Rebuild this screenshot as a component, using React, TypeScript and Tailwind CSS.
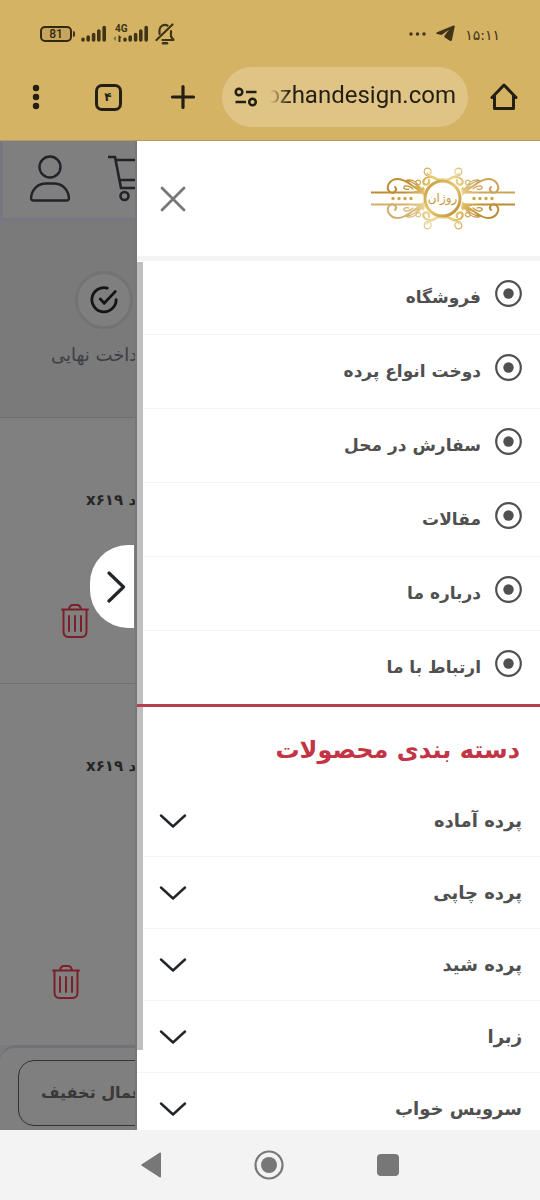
import React from 'react';

const menuItems = [
  'فروشگاه',
  'دوخت انواع پرده',
  'سفارش در محل',
  'مقالات',
  'درباره ما',
  'ارتباط با ما',
];

const categories = ['پرده آماده', 'پرده چاپی', 'پرده شید', 'زبرا', 'سرویس خواب'];

const SignalBars: React.FC = () => (
  <svg width="26" height="17" viewBox="0 0 26 17" fill="none" stroke="currentColor" strokeWidth="3.6" strokeLinecap="round">
    <path d="M2 15v-.6M7.2 15v-3M12.6 15V9.500M17.800 15V6M23.200 15V2.500" />
  </svg>
);

const StatusBar: React.FC = () => (
  <div className="flex h-[67px] items-center justify-between px-10 text-[#403416]">
    <div className="flex items-center">
      <div className="flex items-center">
        <div className="flex h-4 w-8 items-center justify-center rounded-[5px] border-2 border-current bg-[#c5a65c] font-['Roboto',sans-serif] text-xs font-medium text-[#33290f]">
          81
        </div>
        <div className="ml-px h-1.5 w-0.5 rounded-r bg-current" />
      </div>
      <div className="ml-1.5">
        <SignalBars />
      </div>
      <div className="relative ml-4">
        <SignalBars />
        <span className="absolute -top-0.5 -left-2 font-['Roboto',sans-serif] text-[10px] leading-3 font-bold">4G</span>
        <svg className="absolute bottom-0 -left-2.5" width="12" height="7" viewBox="0 0 12 7" fill="currentColor">
          <path d="M3 1v5L0 3.500z" opacity=".5" />
          <path d="M5.500 0 9 2.500H7.500V7h-2z" />
        </svg>
      </div>
      <svg className="ml-1.5" width="20" height="22" viewBox="0 0 20 22" fill="none" stroke="currentColor" strokeWidth="2.200" strokeLinecap="round" strokeLinejoin="round">
        <path d="M4.500 11V8a5.500 5.500 0 0 1 8-5.500M1.500 17 17.500 1.500M7.500 17h11L16 13.500V8" />
        <path d="M8 20.200h4" strokeWidth="2.500" />
      </svg>
    </div>
    <div className="flex items-center gap-2.5">
      <svg width="17" height="4" viewBox="0 0 17 4" fill="currentColor">
        <circle cx="2" cy="2" r="1.700" />
        <circle cx="8.500" cy="2" r="1.700" />
        <circle cx="15" cy="2" r="1.700" />
      </svg>
      <svg width="19" height="17" viewBox="0 0 19 17" fill="currentColor">
        <path d="M17.500.6 1 7.200c-.9.400-.9 1.500 0 1.800l4.600.9L13 4.800 9 10c-1 1.200-.8 2 .3 2.800l4.500 3c1 .6 1.900.3 2.100-.8L18.700 1.800c.2-1-.4-1.500-1.200-1.200z" />
      </svg>
      <span className="pt-0.5 font-['DejaVu_Sans',sans-serif] text-sm">۱۵:۱۱</span>
    </div>
  </div>
);

const Toolbar: React.FC = () => (
  <div className="flex h-[60px] items-center text-[#231f14]">
    <button aria-label="منو" className="flex w-[72px] justify-center">
      <svg width="8" height="26" viewBox="0 0 8 26" fill="currentColor">
        <circle cx="4" cy="4" r="3.200" />
        <circle cx="4" cy="13" r="3.200" />
        <circle cx="4" cy="22" r="3.200" />
      </svg>
    </button>
    <button className="flex w-[72px] justify-center">
      <span className="flex h-[27px] w-[27px] items-center justify-center rounded-[7px] border-3 border-current font-['DejaVu_Sans',sans-serif] text-xs leading-3 font-bold">
        ۴
      </span>
    </button>
    <button aria-label="برگه جدید" className="flex w-[78px] justify-center">
      <svg width="26" height="26" viewBox="0 0 26 26" stroke="currentColor" strokeWidth="3.200" strokeLinecap="round">
        <path d="M13 2.500v21M2.500 13h21" />
      </svg>
    </button>
    <div className="flex h-[60px] min-w-0 flex-1 items-center gap-3 rounded-full bg-[#dfc485] px-3">
      <svg className="shrink-0" width="24" height="20" viewBox="0 0 24 20" fill="none" stroke="currentColor" strokeWidth="2.500">
        <circle cx="5" cy="5" r="3.300" />
        <circle cx="18.500" cy="15" r="3.300" />
        <path d="M12 5h10.500M1.500 15H12" />
      </svg>
      <div className="flex min-w-0 flex-1 justify-end overflow-hidden pb-1 [mask-image:linear-gradient(to_right,transparent,black_20px)]">
        <span dir="ltr" className="font-['Roboto',sans-serif] text-2xl whitespace-nowrap">ozhandesign.com</span>
      </div>
    </div>
    <button aria-label="خانه" className="flex w-[72px] justify-center">
      <svg width="28" height="28" viewBox="0 0 28 28" fill="none" stroke="currentColor" strokeWidth="3" strokeLinejoin="round" strokeLinecap="round">
        <path d="M2 14.500 14 2l12 12.500M4.500 13v12.500h19V13" />
      </svg>
    </button>
  </div>
);

const TrashIcon: React.FC = () => (
  <svg width="28" height="34" viewBox="0 0 28 34" fill="none" stroke="#7c1f29" strokeWidth="2" strokeLinecap="round">
    <path d="M1 5.500h26M8 5.500C8.500 2 10 1 12 1h4c2 0 3.500 1 4 4.500M2.500 5.500v22c0 3.500 1.500 5.500 5 5.500h13c3.500 0 5-2 5-5.500v-22" />
    <path d="M8 12v15M14 12v15M20 12v15" />
  </svg>
);

const ShopPage: React.FC = () => (
  <div className="flex w-1/4 flex-col overflow-hidden bg-[#808080] font-['DejaVu_Sans',sans-serif] whitespace-nowrap">
    <div className="flex h-20 shrink-0 gap-[38px] border-b-3 border-l-3 border-[#777783] bg-[#7f7f7f] pt-3.5 pl-[27px] text-[#222329]">
      <svg className="shrink-0" width="40" height="47" viewBox="0 0 40 47" fill="none" stroke="currentColor" strokeWidth="2.400">
        <circle cx="20" cy="12" r="10.500" />
        <path d="M3 45.500h34c1.500 0 2-1 2-2.500C38 34 32 28.500 24 28.500h-8C8 28.500 2 34 1 43c0 1.500.500 2.500 2 2.500z" />
      </svg>
      <svg className="shrink-0" width="46" height="47" viewBox="0 0 46 47" fill="none" stroke="currentColor" strokeWidth="2.600">
        <path d="M0 2h7l6 31h27M8 5h36l-4 20H12" />
        <circle cx="16.500" cy="41" r="4" />
        <circle cx="36" cy="41" r="4" />
      </svg>
    </div>
    <div className="flex flex-col items-start border-b border-[#6f6f6f] bg-[#7a7a7a] pt-[50px] pb-12">
      <div className="ml-[75px] flex h-[58px] w-[58px] items-center justify-center rounded-full border-3 border-[#717375] bg-[#7f7f7f]">
        <svg width="28" height="28" viewBox="0 0 30 30" fill="none" stroke="#151515" strokeWidth="3" strokeLinecap="round">
          <path d="M18.500 2.200A13 13 0 1 0 28 14.500M11 14l4.200 4.500L27 6" />
        </svg>
      </div>
      <span className="mt-3 ml-[51px] text-lg leading-7 text-[#3d3f47]">پرداخت نهایی</span>
    </div>
    <div className="flex flex-col items-start border-b border-[#6f6f6f] pt-[68px] pb-[45px]">
      <span dir="rtl" className="ml-[86px] text-[15px] leading-7 font-bold text-[#262626]">کد x۶۱۹</span>
      <button aria-label="حذف" className="mt-[90px] ml-[61px]">
        <TrashIcon />
      </button>
    </div>
    <div className="flex flex-1 flex-col items-start pt-[68px]">
      <span dir="rtl" className="ml-[86px] text-[15px] leading-7 font-bold text-[#262626]">کد x۶۱۹</span>
      <button aria-label="حذف" className="mt-[185px] ml-[52px]">
        <TrashIcon />
      </button>
    </div>
    <div className="bg-[#7b7b7b]">
      <div className="rounded-tl-2xl border-t-3 border-[#717279] bg-[#7f7f7f] pt-3 pb-1 pl-[18px]">
        <button className="h-[66px] rounded-2xl border border-[#333] px-[22px] text-base font-bold text-[#383838]">
          اعمال تخفیف
        </button>
      </div>
    </div>
  </div>
);

const Flourish: React.FC = () => (
  <g fill="none" stroke="url(#gold)" strokeLinecap="round">
    <path d="M0 25.500h52" strokeWidth="1.800" strokeLinecap="butt" />
    <path d="M50 24C42 21 36 12 27 12c-9 0-13 9-8 13 4 2.500 8-2 5-5" strokeWidth="2" />
    <path d="M51 22c-6-3-9-9-17-8M49 20c-3-4-6-8-13-7M45 17c3 2 6-1 4-3s-5 0-4 2" strokeWidth="1.200" />
    <path d="M42 22c-3-3-8-4-9-2s3 3 5 2" strokeWidth="1.300" />
    <path d="M53 22l-8-2 3 4-5 1 9 1" strokeWidth="1.600" fill="url(#gold)" />
    <path d="M71 14c-5 0-7-4-12-4-5 0-8 4-6 7 3 2 6-1 5-4" strokeWidth="2.200" />
    <path d="M58 9c-4 0-6-4-4-7 3-2 7 0 6 4-1 2-4 2-4 0M58 9c4-1 6 2 9 3h5" strokeWidth="1.100" />
    <path d="M52 20c2 3 1 5 0 8" strokeWidth="1.200" />
  </g>
);

const Logo: React.FC = () => (
  <svg width="144" height="64" viewBox="0 0 144 64" role="img" aria-label="روژان">
    <defs>
      <linearGradient id="gold" gradientUnits="userSpaceOnUse" x1="0" y1="0" x2="76" y2="34">
        <stop offset="0" stopColor="#b98a35" />
        <stop offset=".5" stopColor="#c08f35" />
        <stop offset=".75" stopColor="#e9ce74" />
        <stop offset="1" stopColor="#d8b558" />
      </linearGradient>
      <linearGradient id="ring" x1="0" y1="0" x2="1" y2="1">
        <stop offset="0" stopColor="#c3973a" />
        <stop offset=".5" stopColor="#e6cb70" />
        <stop offset="1" stopColor="#b8862f" />
      </linearGradient>
    </defs>
    <Flourish />
    <g transform="translate(144 0) scale(-1 1)" opacity=".8">
      <Flourish />
    </g>
    <g transform="translate(0 63) scale(1 -1)" opacity=".7">
      <Flourish />
    </g>
    <g transform="translate(144 63) scale(-1 -1)">
      <Flourish />
    </g>
    <g fill="#cda648">
      {[22, 28, 34, 40, 103, 109, 115, 121].map(x => (
        <circle key={x} cx={x} cy="31.500" r="1.700" />
      ))}
    </g>
    <circle cx="71.500" cy="31.500" r="17.500" fill="white" stroke="url(#ring)" strokeWidth="3" />
    <text x="71.500" y="35" textAnchor="middle" fill="#c39a3c" className="font-['DejaVu_Sans',sans-serif] text-xs">
      روژان
    </text>
  </svg>
);

const Drawer: React.FC = () => (
  <aside className="relative w-3/4 border-l-2 border-[#777] bg-white">
    <div className="h-full overflow-hidden">
      <div className="flex h-[120px] items-center justify-between border-b-5 border-[#f4f4f4] pr-[25px] pl-[23px]">
        <button aria-label="بستن">
          <svg width="26" height="26" viewBox="0 0 26 26" stroke="#777" strokeWidth="2.800" strokeLinecap="round">
            <path d="M2 2l22 22M24 2 2 24" />
          </svg>
        </button>
        <Logo />
      </div>
      <nav dir="rtl" className="font-['DejaVu_Sans',sans-serif] text-[#505050]">
        <ul className="divide-y divide-[#f3f3f3]">
          {menuItems.map(item => (
            <li key={item}>
              <a href="#" className="flex h-[73px] items-center gap-3.5 px-[18px]">
                <svg className="mb-2" width="27" height="27" viewBox="0 0 27 27" fill="none" stroke="currentColor">
                  <circle cx="13.500" cy="13.500" r="12.300" strokeWidth="2.200" />
                  <circle cx="13.500" cy="13.500" r="5.200" fill="currentColor" stroke="none" />
                </svg>
                <span className="text-[17px] font-bold">{item}</span>
              </a>
            </li>
          ))}
        </ul>
        <h2 className="relative z-10 flex h-[81px] items-center border-t-3 border-[#b5404e] px-5 pt-2 text-2xl font-bold text-[#c33544]">
          دسته بندی محصولات
        </h2>
        <ul className="divide-y divide-[#f3f3f3]">
          {categories.map(item => (
            <li key={item}>
              <button className="flex h-[71px] w-full items-center justify-between pr-[18px] pl-[22px] text-lg font-bold">
                {item}
                <svg width="28" height="14" viewBox="0 0 28 14" fill="none" stroke="#212529" strokeWidth="2.400" strokeLinecap="round" strokeLinejoin="round">
                  <path d="M2 1.500 14 12.500 26 1.500" />
                </svg>
              </button>
            </li>
          ))}
        </ul>
      </nav>
    </div>
    <div className="absolute top-[121px] bottom-20 left-0 w-1.5 bg-[#bfbfbf]" />
    <button aria-label="بستن منو" className="absolute top-[404px] right-full mr-[3px] flex h-[83px] w-11 items-center justify-center rounded-l-[38px] bg-white pl-2">
      <svg width="19" height="32" viewBox="0 0 19 32" fill="none" stroke="#212529" strokeWidth="3.2" strokeLinecap="round" strokeLinejoin="round">
        <path d="M2 2l14.500 14L2 30" />
      </svg>
    </button>
  </aside>
);

const NavBar: React.FC = () => (
  <div className="flex h-[70px] items-center justify-center gap-[93px] bg-[#f3f3f3] text-[#777]">
    <button aria-label="بازگشت">
      <svg width="20" height="26" viewBox="0 0 20 26" fill="currentColor">
        <path d="M18.500.700c.700-.400 1.500 0 1.500.800v23c0 .800-.800 1.200-1.500.800L.800 13.800c-.800-.500-.800-1.100 0-1.600z" />
      </svg>
    </button>
    <button aria-label="خانه">
      <svg width="30" height="30" viewBox="0 0 30 30" fill="none" stroke="currentColor">
        <circle cx="15" cy="15" r="13.500" strokeWidth="2.200" />
        <circle cx="15" cy="15" r="8" fill="currentColor" stroke="none" />
      </svg>
    </button>
    <button aria-label="برنامه‌های اخیر">
      <div className="h-[22px] w-[22px] rounded bg-current" />
    </button>
  </div>
);

export default function App() {
  return (
    <div className="flex h-screen flex-col overflow-hidden bg-white">
      <header className="border-b border-[#b09a64] bg-[#d4b365] pb-[13px]">
        <StatusBar />
        <Toolbar />
      </header>
      <main className="flex min-h-0 flex-1">
        <ShopPage />
        <Drawer />
      </main>
      <NavBar />
    </div>
  );
}
